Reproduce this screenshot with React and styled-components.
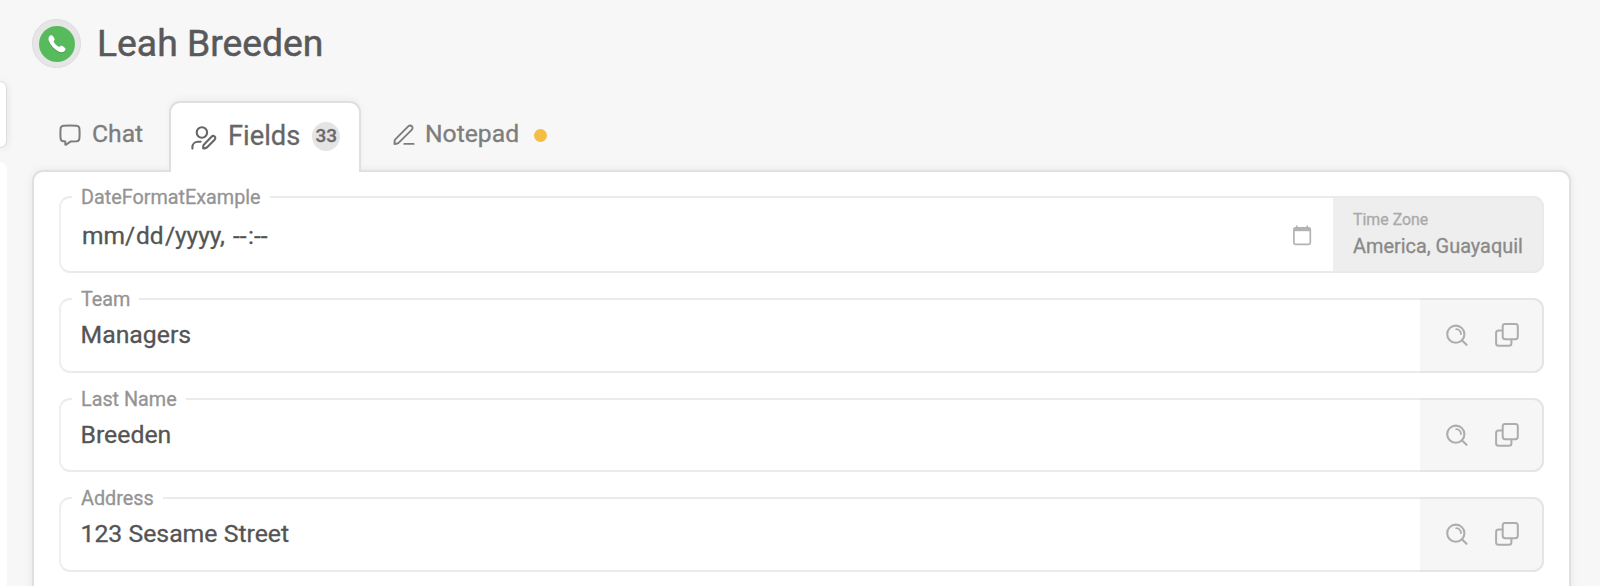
import React from 'react';
import styled, { createGlobalStyle } from 'styled-components';

const GlobalStyle = createGlobalStyle`
  * {
    box-sizing: border-box;
  }
  body {
    margin: 0;
    background: #f7f7f7;
    font-family: Roboto, "Liberation Sans", sans-serif;
    -webkit-font-smoothing: antialiased;
    -webkit-text-stroke: 0.3px currentColor;
  }
`;

const Page = styled.div`
  display: flex;
  height: 586px;
  overflow: hidden;
  background: #f7f7f7;
`;

const Rail = styled.aside`
  display: flex;
  flex-direction: column;
  flex: 0 0 7px;
  gap: 15px;
  padding-top: 82px;
`;

const RailCard = styled.div`
  width: ${p => p.$width}px;
  height: ${p => p.$height}px;
  flex: none;
  background: #fff;
  border-radius: 0 9px 9px 0;
  box-shadow: ${p => (p.$raised ? '0 0 0 1px #dedede, 0 1px 10px rgba(0, 0, 0, 0.13)' : 'none')};
`;

const Main = styled.main`
  flex: 1;
  padding: 19px 29px 0 25px;
`;

const Header = styled.header`
  display: flex;
  align-items: center;
  gap: 16px;
  height: 49px;
`;

const Avatar = styled.div`
  display: flex;
  align-items: center;
  justify-content: center;
  width: 49px;
  height: 49px;
  border-radius: 50%;
  background: #e6e6e6;
  border: 1px solid #dcdcdc;
`;

const AvatarDisc = styled.div`
  display: flex;
  align-items: center;
  justify-content: center;
  width: 36px;
  height: 36px;
  border-radius: 50%;
  background: #57bb5e;
`;

const Name = styled.h1`
  margin: -2px 0 0;
  font-size: 37.3px;
  line-height: 48px;
  font-weight: 400;
  color: #58595a;
  -webkit-text-stroke-width: 0.5px;
`;

const Tabs = styled.nav`
  display: flex;
  height: 71px;
  margin-top: 33px;
  padding-left: 27px;
`;

const Tab = styled.div`
  display: flex;
  align-items: flex-start;
  height: 69px;
  padding-top: 17px;
  font-size: 24.7px;
  line-height: 31px;
  color: #7d7d7d;
  svg {
    flex: none;
    margin-top: 6px;
  }
`;

const ChatTab = styled(Tab)`
  width: 110px;
  gap: 11px;
`;

const ActiveTab = styled(Tab)`
  position: relative;
  z-index: 1;
  width: 192px;
  height: 71px;
  padding: 17px 0 0 20px;
  font-size: 27.3px;
  line-height: 33px;
  color: #666;
  background: #fff;
  border: 2px solid #dfdfdf;
  border-bottom: 0;
  border-radius: 11px 11px 0 0;
  box-shadow: 0 -3px 8px -2px rgba(0, 0, 0, 0.06);
`;

const NotepadTab = styled(Tab)`
  padding-left: 32px;
  gap: 10px;
`;

const TabText = styled.span`
  margin-left: 11px;
`;

const Count = styled.span`
  width: 28px;
  height: 29px;
  margin: 2px 0 0 12px;
  border-radius: 50%;
  background: #e4e4e4;
  font-size: 19px;
  line-height: 28px;
  font-weight: 500;
  text-align: center;
  color: #6a6a6a;
`;

const Dot = styled.span`
  width: 13px;
  height: 13px;
  margin: 11px 0 0 5px;
  border-radius: 50%;
  background: #f5bd41;
`;

const Panel = styled.section`
  display: flex;
  flex-direction: column;
  gap: 25px;
  width: 1539px;
  height: 460px;
  margin-top: -2px;
  padding: 24px 25px 0;
  background: #fff;
  border: 2px solid #e0e0e0;
  border-radius: 11px;
  box-shadow: 0 0 8px rgba(0, 0, 0, 0.07);
`;

const FieldBox = styled.div`
  position: relative;
  display: flex;
  flex: none;
  width: 1485px;
  height: ${p => p.$height || 74.5}px;
  border: 2px solid #ebebeb;
  border-left-color: #efefef;
  border-radius: 11px;
`;

const FieldLabel = styled.label`
  position: absolute;
  top: -12px;
  left: 11px;
  padding: 0 9px;
  font-size: 19.8px;
  line-height: 24px;
  color: #949494;
  background: #fff;
`;

const Value = styled.div`
  display: flex;
  align-items: center;
  flex: 1;
  padding: 0 0 1px 19.5px;
  font-size: 24.8px;
  color: #545454;
`;

const DateValue = styled(Value)`
  padding: 2px 21px 0 21px;
  font-size: 24.5px;
  justify-content: space-between;
`;

const DateMask = styled.span`
  display: flex;
`;

const Part = styled.span`
  width: ${p => p.$width}px;
`;

const Zone = styled.div`
  width: 211px;
  margin: -2px -2px -2px 0;
  padding: 13px 0 0 20px;
  border: 2px solid #eaeaea;
  border-left: 0;
  border-radius: 0 11px 11px 0;
  background: #eee;
`;

const ZoneLabel = styled.div`
  font-size: 15.9px;
  line-height: 18px;
  color: #aaa;
`;

const ZoneName = styled.div`
  margin-top: 5px;
  font-size: 19.9px;
  line-height: 26px;
  white-space: nowrap;
  color: #898989;
`;

const Actions = styled.div`
  display: flex;
  align-items: center;
  gap: 27px;
  width: 124px;
  margin: -2px -2px -2px 0;
  padding-left: 26px;
  background: #f6f6f6;
  border: 2px solid #e5e5e5;
  border-left: 0;
  border-radius: 0 11px 11px 0;
`;

const PhoneIcon = () => (
  <svg width="22" height="22" viewBox="0 0 22 22">
    <path
      d="M3.2 3.4 C3.9 2.2 5.9 1.8 6.8 3 L8.3 5.2 C9.1 6.5 8.4 7.6 7.5 8.3 C8.5 10.8 10.8 13 13.3 14.1 C14.1 13 15.3 12.4 16.4 13.1 L18.7 14.7 C20 15.7 19.5 17.4 18.4 18.3 C16.8 19.8 13.9 19.4 11.6 18 C8 15.9 4.5 12 2.9 8 C2.2 6.1 2.3 4.7 3.2 3.4 Z"
      fill="#4b9e51"
      transform="translate(0 1)"
    />
    <path
      d="M3.2 3.4 C3.9 2.2 5.9 1.8 6.8 3 L8.3 5.2 C9.1 6.5 8.4 7.6 7.5 8.3 C8.5 10.8 10.8 13 13.3 14.1 C14.1 13 15.3 12.4 16.4 13.1 L18.7 14.7 C20 15.7 19.5 17.4 18.4 18.3 C16.8 19.8 13.9 19.4 11.6 18 C8 15.9 4.5 12 2.9 8 C2.2 6.1 2.3 4.7 3.2 3.4 Z"
      fill="#fff"
    />
  </svg>
);

const ChatIcon = () => (
  <svg width="22" height="22" viewBox="0 0 22 22" fill="none" stroke="currentColor" strokeWidth="2" strokeLinejoin="round">
    <path d="M4.4 1.8 Q11 1.1 17.6 1.8 Q20.2 2.1 20.4 4.7 Q20.8 9.5 20.4 14.3 Q20.2 16.9 17.6 17.2 L11.4 17.6 L7 20.7 Q6.3 21.1 6.3 20.2 V17.5 L4.4 17.2 Q1.8 16.9 1.6 14.3 Q1.2 9.5 1.6 4.7 Q1.8 2.1 4.4 1.8 Z" />
  </svg>
);

const FieldsIcon = () => (
  <svg width="26" height="24" viewBox="0 0 26 24" fill="none" stroke="currentColor" strokeWidth="2.1" strokeLinecap="round" strokeLinejoin="round">
    <circle cx="10.9" cy="6.5" r="5.2" />
    <path d="M1.4 22.6 V21.3 C1.4 18 4 15.8 7 15.8 H9.7" />
    <path d="M12.2 22.4 Q11.8 20 12.8 18.7 L20.5 10.8 C21.4 9.8 22.7 9.7 23.6 10.5 C24.6 11.4 24.5 12.8 23.6 13.7 L15.9 21.4 Q14.6 22.5 12.2 22.4 Z" />
  </svg>
);

const PenIcon = () => (
  <svg width="22" height="22" viewBox="0 0 22 22" fill="none" stroke="currentColor" strokeWidth="1.9" strokeLinecap="round" strokeLinejoin="round">
    <path d="M1.5 20 L1.6 16.8 Q1.7 16 2.3 15.4 L15.2 2.4 C16.3 1.3 17.7 1.2 18.8 2.2 C19.9 3.3 19.7 4.8 18.7 5.8 L5.8 18.7 Q5.2 19.4 4.4 19.5 Z" />
    <path d="M11.3 19.9 H20.6" />
  </svg>
);

const CalendarIcon = () => (
  <svg width="20" height="21" viewBox="0 0 20 21" fill="none">
    <path d="M4.8 0.5 V3 M15.2 0.5 V3" stroke="#b3b3b3" strokeWidth="1.6" />
    <rect x="1.9" y="2.9" width="16.4" height="16.4" rx="1.6" stroke="#b3b3b3" strokeWidth="1.7" />
    <path d="M1.9 2.6 H18.3 V6.2 H1.9 Z" fill="#b3b3b3" />
  </svg>
);

const SearchIcon = () => (
  <svg width="22" height="22" viewBox="0 0 22 22" fill="none" stroke="#adadad" strokeWidth="2.1" strokeLinecap="round">
    <circle cx="9.8" cy="10.2" r="8.6" />
    <path d="M10.2 5.2 A5.2 5.2 0 0 1 15 10.1" strokeWidth="1.8" />
    <path d="M16.1 16.5 L20.5 20.8" />
  </svg>
);

const CopyIcon = () => (
  <svg width="24" height="24" viewBox="0 0 24 24" fill="none" stroke="#adadad" strokeWidth="2" strokeLinejoin="round">
    <rect x="7.7" y="1.1" width="15.1" height="15.1" rx="2.4" />
    <path d="M7.7 7.6 H3.6 Q1.1 7.6 1.1 10.1 V20.3 Q1.1 22.8 3.6 22.8 H13.9 Q16.4 22.8 16.4 20.3 V16.2" />
  </svg>
);

const fields = [
  { label: 'Team', value: 'Managers' },
  { label: 'Last Name', value: 'Breeden' },
  { label: 'Address', value: '123 Sesame Street' },
];

function Field({ label, value }) {
  return (
    <FieldBox>
      <FieldLabel>{label}</FieldLabel>
      <Value>{value}</Value>
      <Actions>
        <SearchIcon />
        <CopyIcon />
      </Actions>
    </FieldBox>
  );
}

function DateField() {
  return (
    <FieldBox $height={77}>
      <FieldLabel>DateFormatExample</FieldLabel>
      <DateValue>
        <DateMask>
          <Part $width={43}>mm</Part>
          <Part $width={11}>/</Part>
          <Part $width={29}>dd</Part>
          <Part $width={10}>/</Part>
          <Part $width={45}>yyyy</Part>
          <Part $width={13}>,</Part>
          <Part $width={15}>--</Part>
          <Part $width={6}>:</Part>
          <Part $width={15}>--</Part>
        </DateMask>
        <CalendarIcon />
      </DateValue>
      <Zone>
        <ZoneLabel>Time Zone</ZoneLabel>
        <ZoneName>America, Guayaquil</ZoneName>
      </Zone>
    </FieldBox>
  );
}

function App() {
  return (
    <Page>
      <GlobalStyle />
      <Rail>
        <RailCard $width={6} $height={65} $raised />
        <RailCard $width={7} $height={440} />
      </Rail>
      <Main>
        <Header>
          <Avatar>
            <AvatarDisc>
              <PhoneIcon />
            </AvatarDisc>
          </Avatar>
          <Name>Leah Breeden</Name>
        </Header>
        <Tabs>
          <ChatTab>
            <ChatIcon />
            Chat
          </ChatTab>
          <ActiveTab>
            <FieldsIcon />
            <TabText>Fields</TabText>
            <Count>33</Count>
          </ActiveTab>
          <NotepadTab>
            <PenIcon />
            Notepad
            <Dot />
          </NotepadTab>
        </Tabs>
        <Panel>
          <DateField />
          {fields.map(f => (
            <Field key={f.label} label={f.label} value={f.value} />
          ))}
        </Panel>
      </Main>
    </Page>
  );
}

export default App;
